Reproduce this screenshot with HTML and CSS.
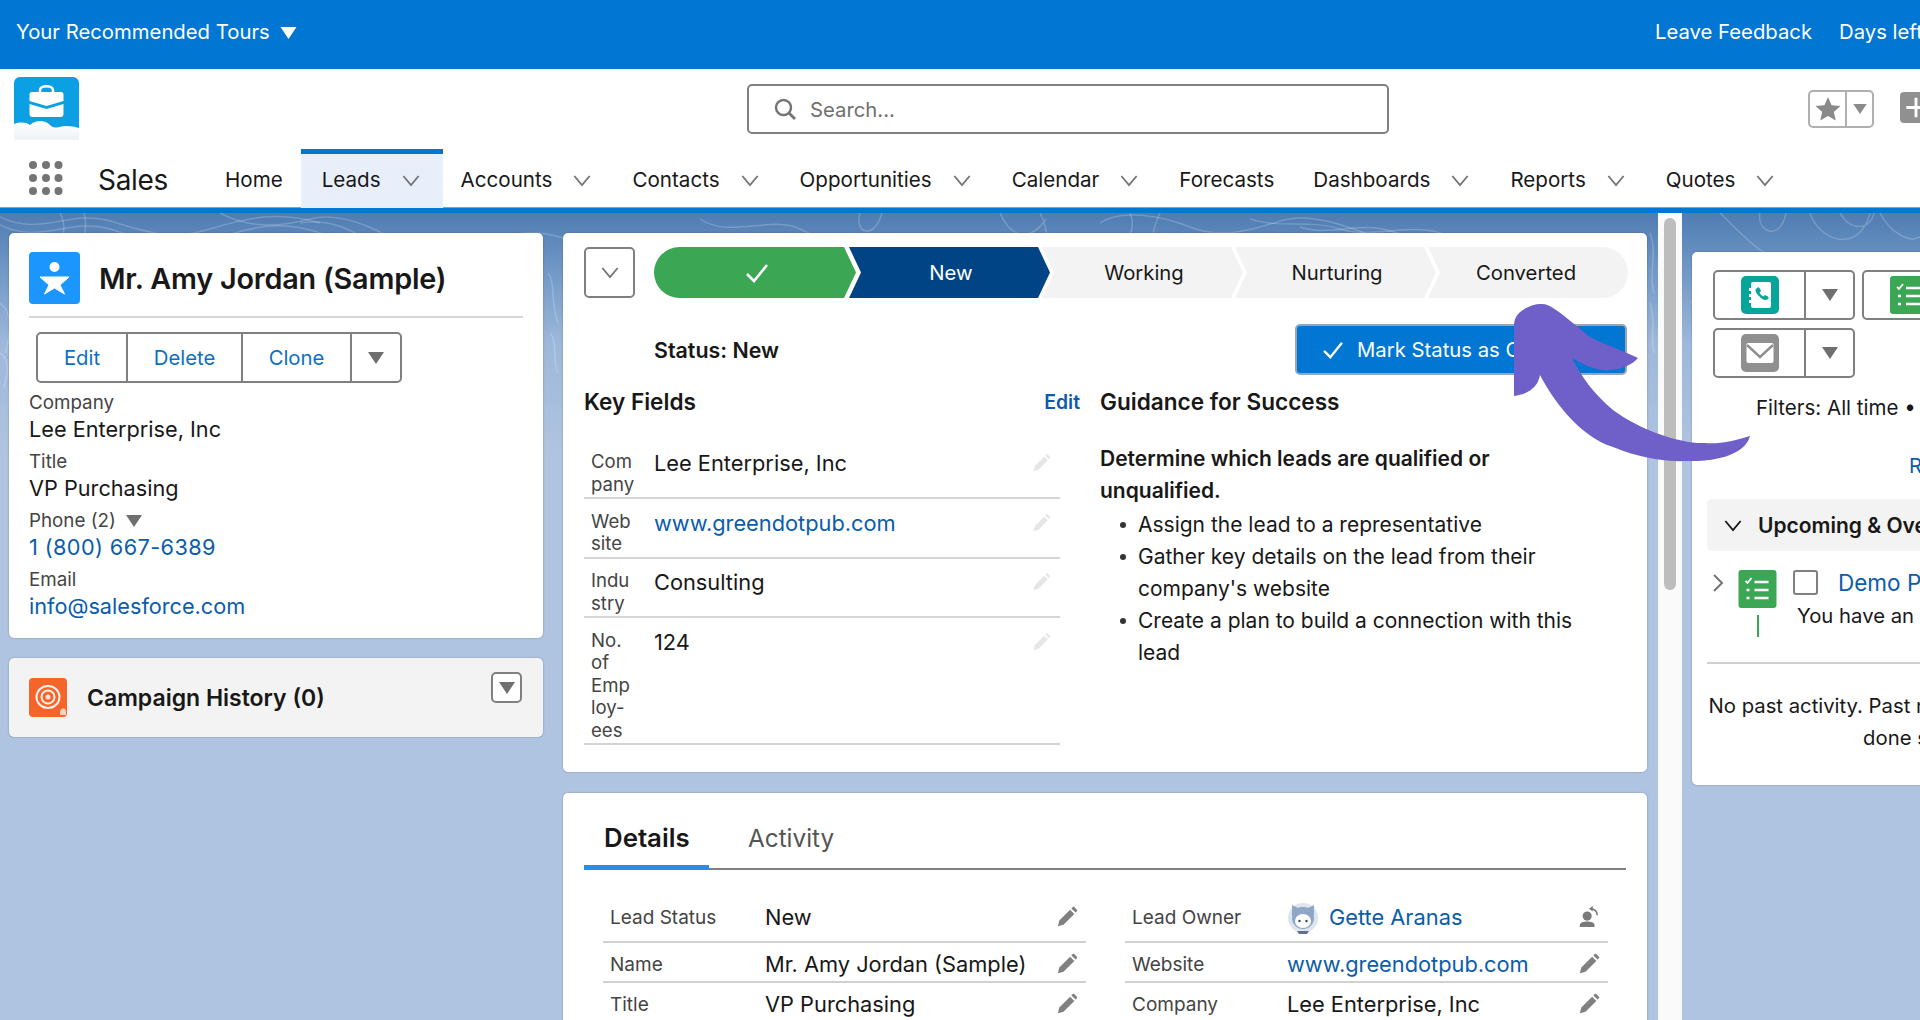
FILE: index.html
```html
<!DOCTYPE html>
<html lang="en">
<head>
<meta charset="utf-8">
<title>Sales - Lead</title>
<link rel="stylesheet" href="styles.css">
</head>
<body>
<svg class="defs" width="0" height="0" aria-hidden="true">
  <symbol id="chev" viewBox="0 0 20 14"><path d="M1.5 2 10 12 18.5 2" fill="none" stroke="currentColor" stroke-width="2"/></symbol>
  <symbol id="caret" viewBox="0 0 16 12"><path d="M0 0h16L8 12z" fill="currentColor"/></symbol>
  <symbol id="pencil" viewBox="0 0 24 24"><path d="M2 22l1.6-6.2L15.4 4l4.6 4.6L8.2 20.400z M16.800 2.600 18.200 1.200c.5-.5 1.200-.5 1.700 0l2.900 2.900c.5.500.5 1.200 0 1.700L21.400 7.200z" fill="currentColor"/></symbol>
  <symbol id="check" viewBox="0 0 24 20"><path d="M2 11l7 7L22 2" fill="none" stroke="currentColor" stroke-width="2.600"/></symbol>
  <symbol id="task" viewBox="0 0 38 38">
    <rect width="38" height="38" rx="3" fill="#3BA755"/>
    <path d="M7 11l2 2 4-5" fill="none" stroke="#fff" stroke-width="1.800"/>
    <path d="M16 12h14M16 20h14M16 28h14M8 20h3M8 28h3" stroke="#fff" stroke-width="2.400"/>
  </symbol>
</svg>

<div class="app">
  <div class="topbar">
    <div class="tours"><span>Your Recommended Tours</span><svg class="tours-caret"><use href="#caret"/></svg></div>
    <div class="topbar-right"><span>Leave Feedback</span><span>Days left</span></div>
  </div>

  <header class="header">
    <svg class="logo" viewBox="0 0 65 63" aria-hidden="true">
      <defs><linearGradient id="fade" x1="0" y1="0" x2="0" y2="1"><stop offset="0" stop-color="#fff"/><stop offset="1" stop-color="#eef1f5"/></linearGradient></defs>
      <path d="M6 0h53a6 6 0 0 1 6 6v50H0V6a6 6 0 0 1 6-6z" fill="#0BA0E3"/>
      <path d="M0 47c6-2 12-2 16 1 5-5 14-5 19-1 4 4 6 4 10 3 6-2 14-1 20 1v12H3c-2 0-3-1-3-3z" fill="url(#fade)"/>
      <path d="M26 15v-2c0-5 13-5 13 0v2" fill="none" stroke="#fff" stroke-width="2.500"/>
      <path d="M18 15h29a2.500 2.500 0 0 1 2.500 2.500V24L32.500 29 15.500 24v-6.500A2.500 2.500 0 0 1 18 15z" fill="#fff"/>
      <path d="M15.500 27 32.500 32 49.500 27V37a3 3 0 0 1-3 3H18.500a3 3 0 0 1-3-3z" fill="#fff"/>
    </svg>
    <div class="search">
      <svg class="search-icon" viewBox="0 0 22 22"><circle cx="9.500" cy="9.500" r="7.500" fill="none" stroke="#747474" stroke-width="2.400"/><path d="M15 15l6 6" stroke="#747474" stroke-width="2.800"/></svg>
      <span>Search...</span>
    </div>
    <div class="fav">
      <span class="fav-star"><svg viewBox="0 0 26 26"><path d="M13 1l3.600 8.200 8.900.8-6.700 5.900 2 8.700L13 20.100 5.200 24.600l2-8.700L.5 10l8.900-.8z" fill="#8a8a8a"/></svg></span>
      <span class="fav-more"><svg class="caret-sm"><use href="#caret"/></svg></span>
    </div>
    <div class="plus"><svg viewBox="0 0 32 32"><path d="M16 6v20M6 16h20" stroke="#fff" stroke-width="3"/></svg></div>
  </header>

  <nav class="nav">
    <svg class="dots" viewBox="0 0 34 34"><g fill="#747474"><circle cx="4" cy="4" r="4"/><circle cx="17" cy="4" r="4"/><circle cx="29.500" cy="4" r="4"/><circle cx="4" cy="17" r="4"/><circle cx="17" cy="17" r="4"/><circle cx="29.500" cy="17" r="4"/><circle cx="4" cy="30" r="4"/><circle cx="17" cy="30" r="4"/><circle cx="29.500" cy="30" r="4"/></g></svg>
    <div class="app-name">Sales</div>
    <div class="tabs">
      <a class="tab">Home</a>
      <a class="tab is-active">Leads<svg class="chev"><use href="#chev"/></svg></a>
      <a class="tab">Accounts<svg class="chev"><use href="#chev"/></svg></a>
      <a class="tab">Contacts<svg class="chev"><use href="#chev"/></svg></a>
      <a class="tab">Opportunities<svg class="chev"><use href="#chev"/></svg></a>
      <a class="tab">Calendar<svg class="chev"><use href="#chev"/></svg></a>
      <a class="tab">Forecasts</a>
      <a class="tab">Dashboards<svg class="chev"><use href="#chev"/></svg></a>
      <a class="tab">Reports<svg class="chev"><use href="#chev"/></svg></a>
      <a class="tab">Quotes<svg class="chev"><use href="#chev"/></svg></a>
    </div>
  </nav>

  <main class="main">
    <svg class="topo" viewBox="0 0 1920 200" preserveAspectRatio="none" aria-hidden="true">
      <g fill="none" stroke="#fff" stroke-opacity=".2" stroke-width="1.500">
        <path d="M0 12c40 20 70-8 110 4s60 26 100 12 70-22 110-8 50 26 70 30"/>
        <path d="M0 4c40 20 70-8 110 4s60 20 100 8 70-18 110-6"/>
        <path d="M60 0c10 20 0 40-24 50M84 0c6 24-6 44-30 60"/>
        <path d="M220 0c30 16 60 14 90 6s70 10 90 26 30 20 50 14"/>
        <path d="M300 10c40-6 60 14 90 30M700 6c30 20 70-4 100 10s40 20 70 18"/>
        <path d="M500 30c10-10 30-14 60-6 30 8 60 20 100 10"/>
        <path d="M860 0c-6 20 14 28 22 0M1100 10c20-14 60-8 90 4s60 4 90-6 70 6 100 18"/>
        <path d="M1000 0c10 24 30 30 46 6M1040 0c6 12 10 24 0 36M1130 0c6 14 0 26-12 36M1160 0c-4 10-10 20-4 30"/>
        <path d="M1250 6c30 10 60 0 90 10s70-6 100 4 50 10 70 0"/>
        <path d="M1300 14c30 10 60-6 90 4s70 10 110 4"/>
        <path d="M1300 24c30 10 60-6 90 4s70 14 110 6"/>
        <path d="M1720 0c30 30 50 50 60 40M1760 0c-4 18 20 30 26 0M1810 0c10 30 50 40 60 0M1840 0c10 18 30 18 34 0M1880 0c10 20 30 30 40 24"/>
        <path d="M1690 90c10-10 40-20 60-10M0 90c14 10 10 30 6 50M0 140c10 6 8 20 4 34M548 60c8 10 2 30 10 50M550 120c8 8 2 30 8 40M1650 20c8 20-2 40 4 60M1650 90c6 14 0 30 4 50"/>
      </g>
    </svg>

    <div class="col-left">
      <section class="card highlights">
        <div class="hl-head">
          <svg class="hl-icon" viewBox="0 0 51 52"><rect width="51" height="52" rx="4" fill="#1B96FF"/><circle cx="25.500" cy="15" r="5" fill="#fff"/><path d="M11 25h29l-9 8 4.500 9-10-6-10 6 4.500-9z" fill="#fff" stroke="#fff" stroke-width="1" stroke-linejoin="round"/></svg>
          <h1 class="hl-title">Mr. Amy Jordan (Sample)</h1>
        </div>
        <div class="btn-group">
          <a class="btn-seg btn-edit">Edit</a>
          <a class="btn-seg btn-delete">Delete</a>
          <a class="btn-seg btn-clone">Clone</a>
          <a class="btn-seg btn-more"><svg class="caret-md"><use href="#caret"/></svg></a>
        </div>
        <dl class="facts">
          <dt>Company</dt><dd>Lee Enterprise, Inc</dd>
          <dt>Title</dt><dd>VP Purchasing</dd>
          <dt>Phone (2)<svg class="caret-inline"><use href="#caret"/></svg></dt><dd class="link phone">1 (800) 667-6389</dd>
          <dt>Email</dt><dd class="link">info@salesforce.com</dd>
        </dl>
      </section>

      <section class="card campaign">
        <svg class="camp-icon" viewBox="0 0 38 39"><rect width="38" height="39" rx="4" fill="#F4642B"/><g fill="none" stroke="#fff" stroke-opacity=".9"><ellipse cx="19" cy="19" rx="11.500" ry="11" stroke-width="2"/><ellipse cx="19" cy="19" rx="6.500" ry="6.500" stroke-width="2"/></g><circle cx="19" cy="19" r="2.500" fill="#fff" fill-opacity=".8"/><path d="M31 37v-3c0-1.500 1-2.500 1.500-3 1-1 3-1 3.500 0 .5.500 1 1.500 1 3v3z" fill="#fff" fill-opacity=".7"/></svg>
        <h2 class="camp-title">Campaign History (0)</h2>
        <span class="camp-btn"><svg class="caret-md"><use href="#caret"/></svg></span>
      </section>
    </div>

    <div class="col-mid">
      <section class="card path-card">
        <div class="path-row">
          <span class="path-toggle"><svg class="chev"><use href="#chev"/></svg></span>
          <div class="path">
            <div class="step step-done"><svg class="step-check"><use href="#check"/></svg></div>
            <div class="step step-current">New</div>
            <div class="step">Working</div>
            <div class="step">Nurturing</div>
            <div class="step step-last">Converted</div>
          </div>
        </div>
        <div class="status-row">
          <div class="status">Status: New</div>
          <a class="mark-btn"><svg class="mark-check"><use href="#check"/></svg>Mark Status as Complete</a>
        </div>
        <div class="path-body">
          <div class="keyfields">
            <div class="kf-head"><h3 class="sec-title">Key Fields</h3><a class="kf-edit">Edit</a></div>
            <div class="kf-row"><div class="kf-label">Com<br>pany</div><div class="kf-val">Lee Enterprise, Inc</div><svg class="pencil-faint"><use href="#pencil"/></svg></div>
            <div class="kf-row"><div class="kf-label">Web<br>site</div><div class="kf-val link">www.greendotpub.com</div><svg class="pencil-faint"><use href="#pencil"/></svg></div>
            <div class="kf-row"><div class="kf-label">Indu<br>stry</div><div class="kf-val">Consulting</div><svg class="pencil-faint"><use href="#pencil"/></svg></div>
            <div class="kf-row"><div class="kf-label">No.<br>of<br>Emp<br>loy-<br>ees</div><div class="kf-val">124</div><svg class="pencil-faint"><use href="#pencil"/></svg></div>
          </div>
          <div class="guidance">
            <h3 class="sec-title">Guidance for Success</h3>
            <p class="guide-lead">Determine which leads are qualified or unqualified.</p>
            <ul class="guide-list">
              <li>Assign the lead to a representative</li>
              <li>Gather key details on the lead from their company's website</li>
              <li>Create a plan to build a connection with this lead</li>
            </ul>
          </div>
        </div>
      </section>

      <section class="card details">
        <div class="dt-tabs">
          <a class="dt-tab is-active">Details</a>
          <a class="dt-tab">Activity</a>
        </div>
        <div class="dt-grid">
          <div class="dt-row dt-first"><span class="dt-label">Lead Status</span><span class="dt-val">New</span><svg class="pencil"><use href="#pencil"/></svg></div>
          <div class="dt-row dt-first"><span class="dt-label">Lead Owner</span><span class="dt-val link owner">
            <svg class="avatar" viewBox="0 0 32 34"><circle cx="16" cy="18" r="15" fill="#DCE4EF"/><path d="M5 5l6 3c3-1 7-1 10 0l6-3v10H5z" fill="#8FA6C4"/><circle cx="16" cy="18" r="11" fill="#8FA6C4"/><ellipse cx="16" cy="21" rx="8" ry="7" fill="#fff"/><circle cx="12.500" cy="21" r="1.200" fill="#33435c"/><circle cx="19.500" cy="21" r="1.200" fill="#33435c"/><path d="M10 31h12l-2 3h-8z" fill="#5d7190"/></svg>Gette Aranas</span>
            <svg class="pencil" viewBox="0 0 24 24"><circle cx="10" cy="11" r="5" fill="#7a7a7a"/><path d="M2 23v-2c0-3 4-4 8-4s8 1 8 4v2z" fill="#7a7a7a"/><path d="M14 3c4 0 7 3 7 7" fill="none" stroke="#7a7a7a" stroke-width="1.800"/><path d="M12 3l4-3v6z" fill="#7a7a7a"/></svg></div>
          <div class="dt-row"><span class="dt-label">Name</span><span class="dt-val">Mr. Amy Jordan (Sample)</span><svg class="pencil"><use href="#pencil"/></svg></div>
          <div class="dt-row"><span class="dt-label">Website</span><span class="dt-val link">www.greendotpub.com</span><svg class="pencil"><use href="#pencil"/></svg></div>
          <div class="dt-row"><span class="dt-label">Title</span><span class="dt-val">VP Purchasing</span><svg class="pencil"><use href="#pencil"/></svg></div>
          <div class="dt-row"><span class="dt-label">Company</span><span class="dt-val">Lee Enterprise, Inc</span><svg class="pencil"><use href="#pencil"/></svg></div>
        </div>
      </section>
    </div>

    <div class="scrollbar"><div class="scroll-thumb"></div></div>

    <div class="col-right">
      <section class="card activity">
        <div class="act-buttons">
          <div class="act-btn">
            <span class="act-main"><svg class="act-icon" viewBox="0 0 38 38"><rect width="38" height="38" rx="5" fill="#06A59A"/><path d="M12 6h16a2 2 0 0 1 2 2v22a2 2 0 0 1-2 2H12a2 2 0 0 1-2-2v-3H8v-3h2v-3H8v-3h2v-3H8v-3h2V8a2 2 0 0 1 2-2z" fill="#fff"/><path d="M16 12c1-1 2-1 3 1l1 2-1.500 1.500c1 2 2 3 4 4L24 19l2 1c2 1 2 2 1 3-1.500 1.500-4 1.500-7-1s-5-5.500-5.500-7c-.3-1 .5-2 1.500-3z" fill="#06A59A"/></svg></span>
            <span class="act-more"><svg class="caret-md"><use href="#caret"/></svg></span>
          </div>
          <div class="act-btn">
            <span class="act-main"><svg class="act-icon"><use href="#task"/></svg></span>
            <span class="act-more"><svg class="caret-md"><use href="#caret"/></svg></span>
          </div>
          <div class="act-btn">
            <span class="act-main"><svg class="act-icon" viewBox="0 0 38 38"><rect width="38" height="38" rx="5" fill="#909090"/><path d="M7 9h24a1.500 1.500 0 0 1 1.500 1.500V27a2 2 0 0 1-2 2h-23a2 2 0 0 1-2-2V10.500A1.500 1.500 0 0 1 7 9z" fill="#fff"/><path d="M6 11l13 12 13-12" fill="none" stroke="#909090" stroke-width="2.400"/></svg></span>
            <span class="act-more"><svg class="caret-md"><use href="#caret"/></svg></span>
          </div>
        </div>
        <div class="act-filter">Filters: All time • All activities • All types</div>
        <div class="act-refresh"><a class="link">Refresh</a></div>
        <div class="act-section"><svg class="chev"><use href="#chev"/></svg><span>Upcoming &amp; Overdue</span></div>
        <div class="act-item">
          <svg class="act-expand" viewBox="0 0 12 20"><path d="M2 2l8 8-8 8" fill="none" stroke="#747474" stroke-width="2"/></svg>
          <div class="act-timeline"><svg class="act-task"><use href="#task"/></svg><span class="act-line"></span></div>
          <div class="act-text">
            <div class="act-top"><span class="act-check"></span><a class="link act-link">Demo Product</a></div>
            <div class="act-sub">You have an upcoming task</div>
          </div>
        </div>
        <p class="act-empty">No past activity. Past meetings and tasks marked as<br>done show up here.</p>
      </section>
    </div>
  </main>

  <svg class="arrow" viewBox="1500 290 260 180" aria-hidden="true">
    <path d="M1542 304C1534 303 1514 310 1514 325L1514 396C1526 395 1538 388 1540 375C1552 398 1578 436 1613 447C1640 458 1665 462 1687 461C1715 462 1745 455 1750 436C1730 442 1720 444 1705 443C1680 444 1640 430 1613 410C1595 395 1582 378 1572 358C1585 366 1600 372 1612 370C1622 369 1632 365 1638 358C1622 350 1605 345 1590 337C1575 325 1560 312 1553 308C1550 306 1546 304 1542 304Z" fill="#6F5FC8"/>
  </svg>
</div>
</body>
</html>
```

FILE: styles.css
```css
* { box-sizing: border-box; }
html, body { margin: 0; padding: 0; height: 100%; overflow: hidden; }
body { font-family: Inter, "Liberation Sans", sans-serif; color: #181818; font-size: 20px; }
h1, h2, h3, p, ul, dl, dd { margin: 0; padding: 0; }
a { text-decoration: none; color: inherit; }
.defs { position: absolute; }
.link { color: #0B5CAB; }

.app { position: relative; width: 1920px; height: 1020px; overflow: hidden; display: flex; flex-direction: column; background: #AFC4E0; }

.topbar { flex: none; height: 69px; background: #0176D3; color: #fff; display: flex; justify-content: space-between; align-items: center; padding: 0 0 7px 16px; white-space: nowrap; font-size: 20.300px; }
.tours { display: flex; align-items: center; gap: 10px; }
.tours-caret { width: 17px; height: 12px; margin-top: 3px; }
.topbar-right { display: flex; gap: 27px; width: 265px; overflow: hidden; }

.header { flex: none; height: 80px; background: #fff; display: flex; align-items: flex-start; padding: 8px 0 0 14px; white-space: nowrap; }
.logo { width: 65px; height: 63px; flex: none; }
.search { width: 642px; height: 50px; margin: 7px 0 0 668px; border: 2px solid #808080; border-radius: 5px; display: flex; align-items: center; gap: 14px; padding-left: 25px; color: #6f6f6f; font-size: 20.300px; flex: none; }
.search-icon { width: 22px; height: 22px; }
.fav { width: 66px; height: 38px; margin: 13px 0 0 419px; border: 2px solid #b0b0b0; border-radius: 5px; display: flex; flex: none; }
.fav-star { width: 37px; display: flex; align-items: center; justify-content: center; border-right: 2px solid #b0b0b0; }
.fav-star svg { width: 26px; height: 26px; }
.fav-more { flex: 1; display: flex; align-items: center; justify-content: center; color: #8a8a8a; }
.caret-sm { width: 14px; height: 10px; }
.plus { width: 36px; height: 31px; margin: 15px 0 0 26px; background: #909090; border-radius: 4px; flex: none; }
.plus svg { display: block; width: 32px; height: 31px; }

.nav { flex: none; height: 64px; background: #fff; display: flex; align-items: stretch; border-bottom: 5px solid #0176D3; box-shadow: inset 0 -1px 0 #56b0f0; white-space: nowrap; padding-left: 29px; }
.dots { width: 34px; height: 34px; flex: none; margin-top: 12px; }
.app-name { font-size: 28px; margin-left: 35px; line-height: 62px; width: 107.500px; flex: none; letter-spacing: -.3px; }
.tabs { display: flex; }
.tab { display: flex; align-items: center; padding: 0 19.500px 3px; font-size: 20.600px; border-top: 5px solid transparent; color: #181818; }
.tab.is-active { background: #E8EFFA; border-top-color: #0176D3; margin: 0 -1.500px; padding: 0 21px 3px; }
.chev { width: 18px; height: 13px; color: #747474; margin: 2px 2px 0 21px; flex: none; }

.main { flex: 1; min-height: 0; position: relative; display: flex; align-items: flex-start; padding-left: 9px; background: linear-gradient(#4F7CB2 0, #6C94C4 50px, #9DB8DA 130px, #AFC4E0 240px); }
.topo { position: absolute; left: 0; top: 0; width: 1920px; height: 200px; }
.card { position: relative; background: #fff; border-radius: 5px; box-shadow: 0 0 2px rgba(24,24,24,.35); }

.col-left { width: 534px; flex: none; margin-top: 20px; display: flex; flex-direction: column; gap: 20px; position: relative; }
.highlights { height: 405px; padding: 20px 20px 0 20px; }
.hl-head { display: flex; align-items: center; gap: 20px; height: 65px; border-bottom: 2px solid #d5d5d5; padding-bottom: 13px; }
.hl-icon { width: 51px; height: 52px; flex: none; }
.hl-title { font-size: 28.800px; font-weight: 600; letter-spacing: -.2px; white-space: nowrap; margin-left: -1px; }
.btn-group { display: flex; width: 366px; height: 51px; margin: 14px 0 0 7px; border: 2px solid #808080; border-radius: 5px; }
.btn-seg { display: flex; align-items: center; justify-content: center; color: #0B6FC2; border-right: 2px solid #808080; font-size: 20.300px; }
.btn-edit { width: 90px; }
.btn-delete { width: 115px; }
.btn-clone { width: 109px; }
.btn-more { flex: 1; border-right: 0; color: #6f6f6f; }
.caret-md { width: 16px; height: 12px; color: #6f6f6f; display: block; }
.facts { margin-top: 7px; }
.facts dt { font-size: 18.800px; color: #444; line-height: 25px; display: flex; align-items: center; }
.facts dd { font-size: 21.700px; line-height: 28px; margin-bottom: 6px; }
.facts .phone { letter-spacing: .4px; }
.caret-inline { width: 16px; height: 12px; color: #6f6f6f; margin-left: 10px; }

.campaign { height: 79px; background: #F3F3F3; display: flex; align-items: center; padding: 0 21px 0 20px; }
.camp-icon { width: 38px; height: 39px; flex: none; }
.camp-title { font-size: 23px; font-weight: 600; margin-left: 20px; flex: 1; white-space: nowrap; }
.camp-btn { position: absolute; right: 21px; top: 14px; width: 31px; height: 31px; background: #fff; border: 2px solid #808080; border-radius: 5px; display: flex; align-items: center; justify-content: center; }

.col-mid { width: 1084px; flex: none; margin: 20px 0 0 20px; display: flex; flex-direction: column; gap: 21px; position: relative; }
.path-card { padding: 14px 19px 27px 21px; }
.path-row { display: flex; align-items: center; gap: 19px; }
.path-toggle { flex: none; width: 51px; height: 51px; border: 2px solid #808080; border-radius: 5px; display: flex; align-items: center; justify-content: center; }
.path-toggle .chev { margin: 0; }
.path { flex: 1; display: flex; height: 51px; }
.step { flex: none; width: 201px; margin-right: -8px; padding-left: 3px; height: 51px; display: flex; align-items: center; justify-content: center; background: #F3F3F3; color: #181818; font-size: 20.300px; clip-path: polygon(0 0, calc(100% - 12px) 0, 100% 50%, calc(100% - 12px) 100%, 0 100%, 12px 50%); }
.step-done { background: #3BA755; color: #fff; width: 202px; border-radius: 26px 0 0 26px; clip-path: polygon(0 0, calc(100% - 12px) 0, 100% 50%, calc(100% - 12px) 100%, 0 100%); margin-right: -7px; }
.step-current { background: #014486; color: #fff; }
.step-last { width: 200px; padding: 0 4px 0 0; border-radius: 0 26px 26px 0; clip-path: polygon(0 0, 100% 0, 100% 100%, 0 100%, 12px 50%); margin-right: 0; }
.step-check { width: 24px; height: 20px; }
.status-row { display: flex; justify-content: space-between; align-items: center; margin-top: 26px; }
.status { padding: 1px 0 0 70px; font-weight: 600; font-size: 21.400px; white-space: nowrap; }
.mark-btn { width: 332px; height: 51px; margin-right: 1px; border: 2px solid #9aa6b2; border-radius: 5px; background: #0176D3; color: #fff; display: flex; align-items: center; padding-left: 25px; gap: 13px; white-space: nowrap; font-size: 20.300px; overflow: hidden; }
.mark-check { width: 22px; height: 18px; flex: none; }
.path-body { display: grid; grid-template-columns: 496px 1fr; gap: 20px; margin-top: 14px; }
.kf-head { display: flex; justify-content: space-between; align-items: center; height: 26px; margin-bottom: 24.500px; }
.sec-title { font-size: 22.600px; font-weight: 600; line-height: 26px; white-space: nowrap; }
.kf-edit { color: #0B5CAB; font-weight: 600; font-size: 19.400px; }
.kf-row { width: 476px; display: grid; grid-template-columns: 70px 1fr 28px; padding-top: 12.500px; border-bottom: 2px solid #d5d5d5; }
.kf-label { padding: 0 0 2px 7px; margin-top: -2px; font-size: 18.600px; line-height: 22.500px; color: #444; }
.kf-val { font-size: 21.800px; line-height: 24px; margin-top: -1px; }
.pencil-faint { width: 19px; height: 22px; color: #e6e6e6; }
.guidance { padding-right: 30px; }
.guide-lead { font-weight: 600; font-size: 21px; line-height: 32px; margin-top: 28px; }
.guide-list { list-style: none; font-size: 21px; line-height: 32px; padding: 2px 0 0 38px; }
.guide-list li { position: relative; }
.guide-list li::before { content: ""; position: absolute; left: -18px; top: 13px; width: 6px; height: 6px; border-radius: 50%; background: #333; }

.details { height: 300px; padding: 0 21px; }
.dt-tabs { display: flex; height: 77px; border-bottom: 2px solid #808080; }
.dt-tab { display: block; height: 77px; width: 125px; padding: 19px 0 0 20px; line-height: 52px; font-size: 24.300px; color: #555; margin-right: 19px; }
.dt-tab.is-active { color: #181818; font-weight: 600; font-size: 25.800px; border-bottom: 5px solid #2E8CE6; }
.dt-grid { display: grid; grid-template-columns: 483px 483px; column-gap: 39px; padding-left: 19px; margin-top: 26px; }
.dt-row { height: 40px; display: flex; align-items: center; border-bottom: 2px solid #d0d0d0; padding: 4px 8px 0 7px; white-space: nowrap; }
.dt-first { height: 47px; padding-top: 0; padding-bottom: 3px; }
.dt-label { width: 155px; flex: none; font-size: 19px; color: #444; }
.dt-val { flex: 1; font-size: 21.800px; }
.owner { display: flex; align-items: center; gap: 10px; }
.avatar { width: 32px; height: 34px; flex: none; }
.pencil { width: 22px; height: 22px; color: #808080; flex: none; }

.scrollbar { width: 24px; flex: none; align-self: stretch; margin-left: 11px; background: #fafafa; padding: 5px 6px 0; position: relative; }
.scroll-thumb { height: 372px; background: #BDBDBD; border-radius: 7px; }

.col-right { flex: none; width: 400px; margin: 39px 0 0 10px; position: relative; }
.activity { height: 533px; padding: 18px 0 0 15px; white-space: nowrap; overflow: hidden; }
.act-buttons { display: grid; grid-template-columns: 142px 142px; column-gap: 7px; row-gap: 8px; padding-left: 6px; }
.act-btn { height: 50px; border: 2px solid #808080; border-radius: 5px; display: flex; }
.act-main { width: 91px; border-right: 2px solid #808080; display: flex; align-items: center; justify-content: center; }
.act-icon { width: 38px; height: 38px; }
.act-more { flex: 1; display: flex; align-items: center; justify-content: center; }
.act-filter { margin: 17px 0 0 49px; line-height: 26px; font-size: 20.500px; }
.act-refresh { margin: 32px 0 0 202px; line-height: 26px; font-size: 20.300px; }
.act-section { height: 52px; width: 380px; margin-top: 20px; background: #F3F3F3; border-radius: 5px 0 0 5px; display: flex; align-items: center; font-weight: 600; font-size: 21px; }
.act-section .chev { color: #181818; margin: 0 16px 0 17px; }
.act-item { display: flex; margin-top: 19px; height: 94px; width: 400px; border-bottom: 2px solid #d0d0d0; }
.act-expand { width: 12px; height: 20px; margin: 3px 0 0 5px; flex: none; }
.act-timeline { width: 39px; margin-left: 14px; display: flex; flex-direction: column; align-items: center; flex: none; }
.act-task { width: 39px; height: 38px; }
.act-line { width: 2px; height: 22px; background: #3BA755; margin-top: 7px; }
.act-text { margin-left: 16px; }
.act-top { display: flex; align-items: center; gap: 20px; height: 25px; }
.act-check { width: 25px; height: 25px; border: 2px solid #808080; border-radius: 3px; }
.act-link { font-size: 22.500px; }
.act-sub { margin: 8px 0 0 4px; line-height: 26px; font-size: 20.300px; }
.act-empty { margin: 26px 0 0 -4px; font-size: 20.300px; line-height: 32px; text-align: center; width: 510px; }

.arrow { position: absolute; left: 1500px; top: 290px; width: 260px; height: 180px; pointer-events: none; }
```
